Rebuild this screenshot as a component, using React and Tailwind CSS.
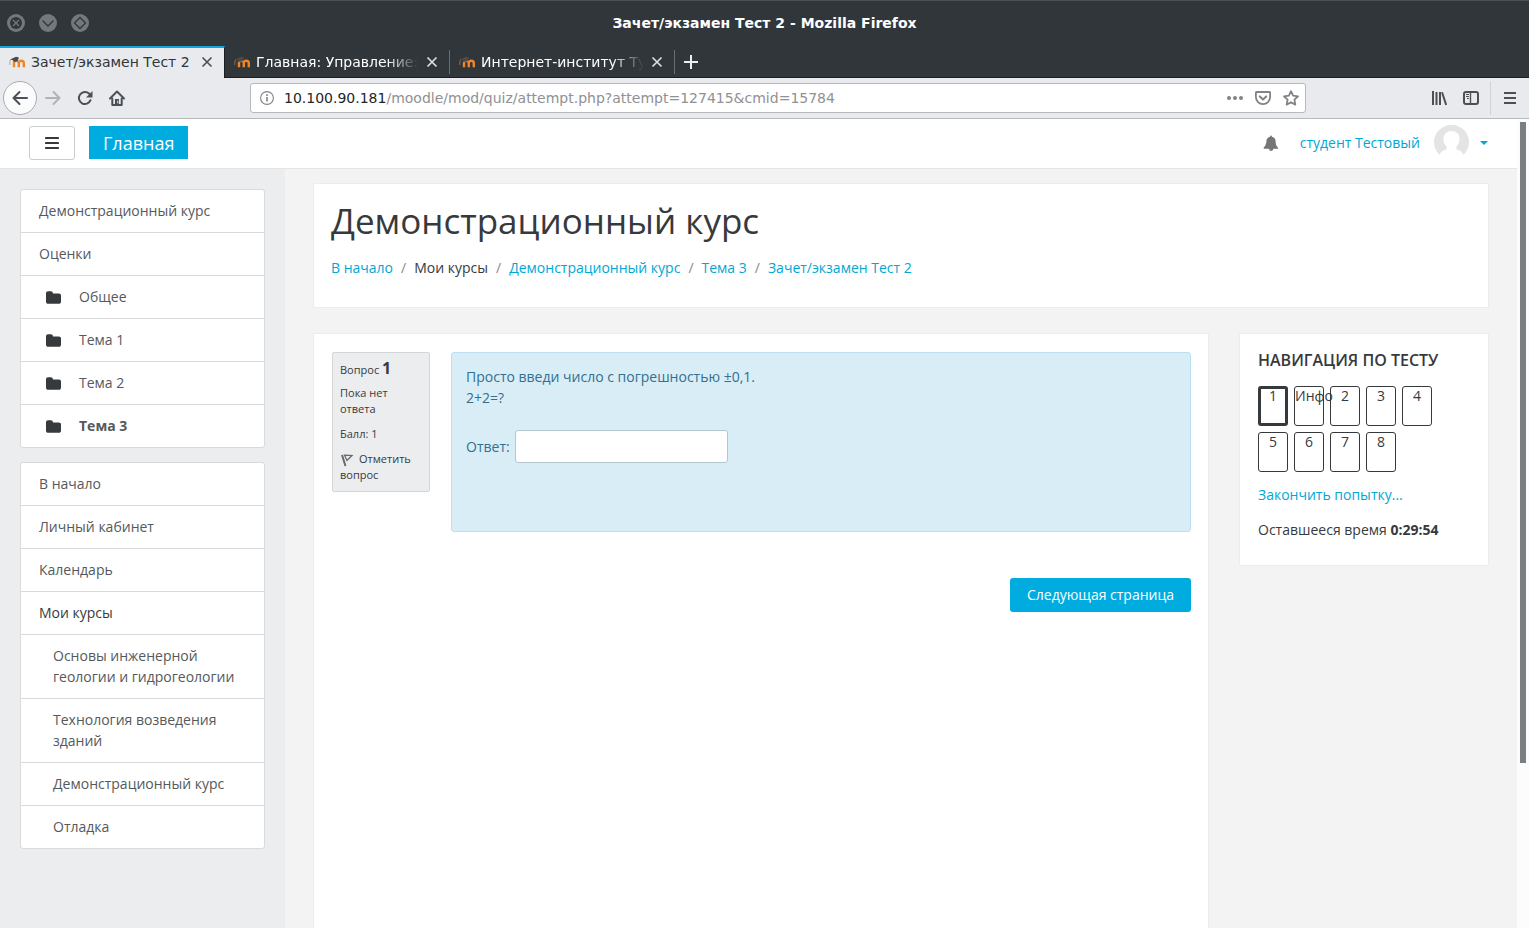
import React from "react";

const courseMenu = [
  { label: "Демонстрационный курс" },
  { label: "Оценки" },
  { label: "Общее", folder: true },
  { label: "Тема 1", folder: true },
  { label: "Тема 2", folder: true },
  { label: "Тема 3", folder: true, active: true },
];

const siteMenu = [
  { label: "В начало" },
  { label: "Личный кабинет" },
  { label: "Календарь" },
  { label: "Мои курсы", heading: true },
  { label: "Основы инженерной геологии и гидрогеологии", nested: true },
  { label: "Технология возведения зданий", nested: true },
  { label: "Демонстрационный курс", nested: true },
  { label: "Отладка", nested: true },
];

const breadcrumbs = [
  { label: "В начало", link: true },
  { label: "Мои курсы" },
  { label: "Демонстрационный курс", link: true },
  { label: "Тема 3", link: true },
  { label: "Зачет/экзамен Тест 2", link: true },
];

const tabs = ["Зачет/экзамен Тест 2", "Главная: Управление:", "Интернет-институт Ту"];

const questions = ["1", "Инфо", "2", "3", "4", "5", "6", "7", "8"];

const MoodleIcon = () => (
  <svg className="size-4 shrink-0" viewBox="0 0 16 16" fill="none" aria-hidden="true">
    <path d="M5 13.300V8.500M9.800 13.300V9c0-3 5-3 5 .2v4.100" stroke="#f08526" strokeWidth="2.400" />
    <path d="M5 9c.3-2.600 4.500-2.600 4.800 0" stroke="#f08526" strokeWidth="2" />
    <path d="M1 5.400 7 2.800l3 .7-1.500 3.800-3.800.700-.7-1.800z" fill="#4b4b4b" />
    <path d="M1.500 5.600C.8 7 .7 9 .8 11" stroke="#a98b6c" strokeWidth=".7" />
  </svg>
);

const CloseIcon = () => (
  <svg className="size-3" viewBox="0 0 12 12" fill="none" stroke="currentColor" strokeWidth="1.7" aria-hidden="true">
    <path d="m1.5 1.5 9 9m0-9-9 9" />
  </svg>
);

const FolderIcon = () => (
  <svg className="mr-[18px] ml-[7px] h-[15px] w-[15px] translate-y-px" viewBox="0 0 1664 1664" fill="#373a3c" aria-hidden="true">
    <path d="M1664 608v704q0 92-66 158t-158 66H224q-92 0-158-66T0 1312V352q0-92 66-158t158-66h320q92 0 158 66t66 158v32h672q92 0 158 66t66 158z" />
  </svg>
);

const BellIcon = () => (
  <svg className="size-4" viewBox="0 0 1792 1792" fill="currentColor" aria-hidden="true">
    <path d="M912 1696q0-16-16-16-59 0-101.5-42.5T752 1536q0-16-16-16t-16 16q0 73 51.5 124.5T896 1712q16 0 16-16zm816-288q0 52-38 90t-90 38h-448q0 106-75 181t-181 75-181-75-75-181H192q-52 0-90-38t-38-90q50-42 91-88t85-119.5 74.5-158.5 50-206T384 640q0-152 117-282.5T808 199q-8-19-8-39 0-40 28-68t68-28 68 28 28 68q0 20-8 39 190 28 307 158.5T1408 640q0 139 19.5 260t50 206 74.5 158.5 85 119.5 91 88z" />
  </svg>
);

const WindowButton = ({ label, children }) => (
  <button aria-label={label} className="size-[18px]">
    <svg viewBox="0 0 18 18" fill="none" stroke="#31363b" strokeWidth="1.3">
      <circle cx="9" cy="9" r="9" fill="#74787c" stroke="none" />
      {children}
    </svg>
  </button>
);

const TitleBar = () => (
  <div className="grid h-[46px] shrink-0 grid-cols-[1fr_auto_1fr] items-center border-t border-[#4b5157] bg-[#31363b] px-[7px] pb-[2px]">
    <div className="flex gap-[14px]">
      <WindowButton label="Закрыть">
        <circle cx="9" cy="9" r="6" fill="#31363b" stroke="none" />
        <path d="m6 6 6 6m0-6-6 6" stroke="#74787c" />
      </WindowButton>
      <WindowButton label="Свернуть">
        <path d="m3.5 6.5 5.5 5.5 5.5-5.5" />
      </WindowButton>
      <WindowButton label="Развернуть">
        <path d="m9 3.5 5.5 5.5L9 14.5 3.5 9z" />
      </WindowButton>
    </div>
    <div className="text-sm font-bold text-white">Зачет/экзамен Тест 2 - Mozilla Firefox</div>
  </div>
);

const TabBar = () => (
  <div className="flex h-8 shrink-0 bg-[#31363b] text-sm">
    {tabs.map((title, index) => (
      <div
        key={title}
        className={
          index === 0
            ? "flex w-[225px] items-center border-t-2 border-r border-t-[#12a9da] border-r-[#1b1e21] bg-[#e9eaee] pb-[2px] pl-[9px] text-[#31363b]"
            : "flex w-[225px] items-center border-b border-[#1b1e21] pl-[9px] text-white"
        }
      >
        <MoodleIcon />
        <span
          className={
            index === 0
              ? "ml-[6px] w-[168px] whitespace-nowrap"
              : "ml-[6px] w-[163px] whitespace-nowrap [mask-image:linear-gradient(to_right,black_80%,transparent)]"
          }
        >
          {title}
        </span>
        <button
          aria-label="Закрыть вкладку"
          className={index === 0 ? "ml-[2px] text-[#4c5257]" : "ml-[7px] text-[#dcdddd]"}
        >
          <CloseIcon />
        </button>
        {index > 0 && <span className="ml-auto h-6 w-px bg-[#6b6f73]" />}
      </div>
    ))}
    <div className="flex flex-1 items-center border-b border-[#1b1e21] pl-[9px]">
      <button aria-label="Новая вкладка" className="text-[#eeeeee]">
        <svg className="size-[14px]" viewBox="0 0 14 14" fill="none" stroke="currentColor" strokeWidth="2">
          <path d="M7 0v14M0 7h14" />
        </svg>
      </button>
    </div>
  </div>
);

const ToolBar = () => (
  <div className="flex h-[41px] shrink-0 items-center border-b border-[#b7b9be] bg-[#e9eaee] pr-[11px] pl-[3px] text-[#4a5055]">
    <button
      aria-label="Назад"
      className="flex size-[34px] items-center justify-center rounded-full border border-[#a9abae] bg-[#fbfbfb]"
    >
      <svg className="size-4" viewBox="0 0 16 16" fill="none" stroke="currentColor" strokeWidth="2" strokeLinecap="round" strokeLinejoin="round">
        <path d="M15 8H1.5M7.5 2l-6 6 6 6" />
      </svg>
    </button>
    <button aria-label="Вперёд" className="ml-2 text-[#b0b2b6]">
      <svg className="size-4" viewBox="0 0 16 16" fill="none" stroke="currentColor" strokeWidth="2" strokeLinecap="round" strokeLinejoin="round">
        <path d="M1 8h13.5M8.500 2l6 6-6 6" />
      </svg>
    </button>
    <button aria-label="Обновить" className="ml-4">
      <svg className="size-4" viewBox="0 0 16 16" fill="none">
        <path d="M13.500 10.200A6 6 0 1 1 12 3.600L13.500 5" stroke="currentColor" strokeWidth="2" strokeLinecap="round" />
        <path d="M15.500 1v6.500H9z" fill="currentColor" />
      </svg>
    </button>
    <button aria-label="Домой" className="ml-4">
      <svg className="size-4" viewBox="0 0 16 16" fill="none" stroke="currentColor" strokeWidth="2" strokeLinecap="round" strokeLinejoin="round">
        <path d="M1 8.500 8 1.500l7 7M3.300 8.500V15h9.400V8.500" />
        <path d="M6 15V9h4v6z" fill="currentColor" stroke="none" />
        <path d="M8.800 11v2" stroke="#e9eaee" strokeWidth="1" />
      </svg>
    </button>

    <div className="ml-[125px] flex h-[30px] flex-1 items-center rounded-[3px] border border-[#b7b9be] bg-white text-[#808386]">
      <svg className="ml-[9px] size-[14px]" viewBox="0 0 14 14" fill="none" stroke="currentColor" aria-hidden="true">
        <circle cx="7" cy="7" r="6.4" strokeWidth="1.1" />
        <path d="M7 6v4.500M7 3.300V5" strokeWidth="1.6" />
      </svg>
      <div className="ml-[10px] flex-1 text-sm text-[#8f9193]">
        <span className="text-[#232629]">10.100.90.181</span>
        /moodle/mod/quiz/attempt.php?attempt=127415&amp;cmid=15784
      </div>
      <div className="mr-[6px] flex items-center gap-3">
        <button aria-label="Действия на странице">
          <svg className="size-4" viewBox="0 0 16 16" fill="currentColor">
            <circle cx="2" cy="8" r="2" />
            <circle cx="8" cy="8" r="2" />
            <circle cx="14" cy="8" r="2" />
          </svg>
        </button>
        <button aria-label="Сохранить в Pocket">
          <svg className="size-4" viewBox="0 0 16 16" fill="none" stroke="currentColor" strokeWidth="1.8" strokeLinecap="round" strokeLinejoin="round">
            <path d="M1.500 2h13c.4 0 .6.200.6.600V7a7.100 7.100 0 0 1-14.200 0V2.600c0-.4.200-.6.600-.6z" />
            <path d="m4.800 6.400 3.200 3 3.200-3" strokeWidth="2" />
          </svg>
        </button>
        <button aria-label="Добавить в закладки">
          <svg className="size-4" viewBox="0 0 16 16" fill="none" stroke="currentColor" strokeWidth="1.800" strokeLinejoin="round">
            <path d="m8 1.200 2.100 4.500 4.900.6-3.600 3.400.9 4.900L8 12.200l-4.300 2.400.9-4.900L1 6.300l4.900-.6z" />
          </svg>
        </button>
      </div>
    </div>

    <div className="ml-[125px] flex items-center">
      <button aria-label="Библиотека">
        <svg className="size-4" viewBox="0 0 16 16" fill="none" stroke="currentColor" strokeWidth="2">
          <path d="M2 1v14M5.500 2v13M9 2v13M11 2.200 15.200 15" />
        </svg>
      </button>
      <button aria-label="Боковая панель" className="ml-4">
        <svg className="size-4" viewBox="0 0 16 16" fill="none" stroke="currentColor">
          <rect x="1" y="2" width="14" height="12" rx="2" strokeWidth="2" />
          <path d="M7.500 2v12" strokeWidth="1.400" />
          <path d="M3 4.500h3M3 6.500h3M4 8.500h2" />
        </svg>
      </button>
      <span className="ml-[11px] h-[34px] w-px bg-[#d0d1d5]" />
      <button aria-label="Меню" className="ml-[11px]">
        <svg className="size-4" viewBox="0 0 16 16" fill="none" stroke="currentColor" strokeWidth="2">
          <path d="M2 3h12M2 8h12M2 13h12" />
        </svg>
      </button>
    </div>
  </div>
);

const Header = () => (
  <header className="flex h-[50px] shrink-0 items-center border-b border-[#e3e4e5] bg-white pr-[29px] pb-[2px] pl-[29px]">
    <button
      aria-label="Боковая панель навигации"
      className="flex h-[34px] w-[46px] items-center justify-center rounded-[3px] border border-[#cccccc]"
    >
      <svg className="h-3 w-[14px]" viewBox="0 0 14 12" fill="#373a3c" aria-hidden="true">
        <rect width="14" height="2" rx=".4" />
        <rect y="5" width="14" height="2" rx=".4" />
        <rect y="10" width="14" height="2" rx=".4" />
      </svg>
    </button>
    <a href="#" className="ml-[14px] flex h-[33px] items-center bg-[#00acdf] px-[14px] text-lg text-white">
      Главная
    </a>
    <button aria-label="Уведомления" className="ml-auto text-[#757575]">
      <BellIcon />
    </button>
    <button className="ml-[21px] flex items-center text-sm text-[#00a8d5]">
      студент Тестовый
      <svg className="ml-[14px] size-[35px]" viewBox="0 0 35 35" aria-hidden="true">
        <path
          d="M5.500 30A17.500 17.500 0 1 1 29.500 30C28.500 27 26.500 25.500 22.500 24.500V21.500C24.500 19.500 25.500 17 25.500 14C25.500 9 22.500 6 17.500 6S9.500 9 9.500 14C9.500 17 10.500 19.500 12.500 21.500V24.500C8.500 25.500 6.500 27 5.500 30Z"
          fill="#e4e4e4"
        />
      </svg>
      <svg className="ml-[11px] h-1 w-2" viewBox="0 0 8 4" fill="currentColor" aria-hidden="true">
        <path d="M0 0h8L4 4z" />
      </svg>
    </button>
  </header>
);

const MenuItem = ({ item }) => {
  if (item.heading) {
    return (
      <li className="border-b border-[#d8dadc] px-[18px] pt-[10px] pb-[11px] text-[#373a3c] last:border-b-0">
        {item.label}
      </li>
    );
  }

  return (
    <li className="border-b border-[#d8dadc] last:border-b-0">
      <a
        href="#"
        className={
          item.nested
            ? "flex pt-[10px] pr-[18px] pb-[11px] pl-[32px]"
            : "flex items-center px-[18px] pt-[10px] pb-[11px]"
        }
      >
        {item.folder && <FolderIcon />}
        <span className={item.active ? "font-bold" : ""}>{item.label}</span>
      </a>
    </li>
  );
};

const Sidebar = () => (
  <nav className="flex w-[285px] shrink-0 flex-col gap-[14px] bg-[#ebedef] p-5 text-sm/[21px] text-[#55595c]">
    {[courseMenu, siteMenu].map((menu, index) => (
      <ul key={index} className="rounded-[3px] border border-[#d8dadc] bg-white">
        {menu.map((item) => (
          <MenuItem key={item.label} item={item} />
        ))}
      </ul>
    ))}
  </nav>
);

const PageHeader = () => (
  <div className="h-[125px] shrink-0 border border-[#ececec] bg-white px-[17px] pt-[17px]">
    <h1 className="text-[35px] leading-[40px]">Демонстрационный курс</h1>
    <ol className="mt-[16px] flex text-sm/[21px]">
      {breadcrumbs.map((crumb, index) => (
        <li key={crumb.label}>
          {index > 0 && <span className="px-2 text-[#818a91]">/</span>}
          {crumb.link ? (
            <a href="#" className="text-[#00a8d5]">{crumb.label}</a>
          ) : (
            crumb.label
          )}
        </li>
      ))}
    </ol>
  </div>
);

const Question = () => (
  <div className="flex items-start gap-[21px]">
    <div className="w-[98px] shrink-0 rounded-[2px] border border-[#d3d6d9] bg-[#ebedef] px-[7px] pt-1 pb-2 text-[11px] leading-4">
      <h3 className="leading-[22px]">
        Вопрос <span className="text-base/[22px] font-bold">1</span>
      </h3>
      <div className="mt-1">Пока нет ответа</div>
      <div className="mt-[9px]">Балл: 1</div>
      <button className="mt-[9px] text-left">
        <svg className="mr-[5px] inline size-[14px]" viewBox="0 0 14 14" fill="none" stroke="#6a6a6a" aria-hidden="true">
          <path d="M2 2 5.500 13" strokeWidth="2" />
          <path d="M4.500 2.200 12 2.500 7 7.500z" strokeWidth="1.300" />
        </svg>
        Отметить вопрос
      </button>
    </div>
    <div className="h-[180px] flex-1 rounded-[3px] border border-[#bcdff1] bg-[#d9edf7] px-[14px] pt-[13px] text-sm/[21px] text-[#31708f]">
      <p>Просто введи число с погрешностью ±0,1.</p>
      <p>2+2=?</p>
      <div className="mt-[22px] flex items-center gap-[5px]">
        <label htmlFor="answer">Ответ:</label>
        <input
          id="answer"
          name="answer"
          type="text"
          autoComplete="off"
          className="h-[33px] w-[213px] rounded-[3px] border border-[#b4c6cf] bg-white px-2 focus:outline-none"
        />
      </div>
    </div>
  </div>
);

const QuizNavigation = () => (
  <aside className="w-[250px] shrink-0 self-start border border-[#ececec] bg-white px-[18px] pt-4 pb-[25px]">
    <h2 className="text-base/[20px] font-semibold">НАВИГАЦИЯ ПО ТЕСТУ</h2>
    <div className="mt-4 grid grid-cols-[repeat(5,30px)] gap-[6px]">
      {questions.map((question, index) => (
        <a
          key={question}
          href="#"
          className={
            index === 0
              ? "flex h-10 justify-center rounded-[3px] border-3 border-[#373a3c] leading-[14px]"
              : question === "Инфо"
                ? "h-10 rounded-[3px] border border-[#373a3c] leading-[18px] whitespace-nowrap"
                : "flex h-10 justify-center rounded-[3px] border border-[#373a3c] leading-[18px]"
          }
        >
          {question}
        </a>
      ))}
    </div>
    <a href="#" className="mt-[12px] block text-[#00a8d5]">Закончить попытку...</a>
    <div className="mt-[14px]">
      Оставшееся время <span className="font-bold">0:29:54</span>
    </div>
  </aside>
);

const App = () => {
  return (
    <div className="flex h-screen flex-col overflow-hidden font-['DejaVu_Sans',sans-serif]">
      {/* Browser chrome */}
      <TitleBar />
      <TabBar />
      <ToolBar />

      <div className="flex min-h-0 flex-1 bg-white font-['Open_Sans',sans-serif] text-sm/[21px] text-[#373a3c]">
        <div className="flex min-w-0 flex-1 flex-col">
          <Header />
          <div className="flex min-h-0 flex-1">
            <Sidebar />
            <main className="flex min-w-0 flex-1 flex-col gap-[25px] bg-[#f3f3f3] px-[28px] pt-[14px]">
              <PageHeader />
              <div className="flex min-h-0 flex-1 gap-[30px]">
                <section className="flex-1 border border-b-0 border-[#ececec] bg-white pt-[18px] pr-[17px] pl-[18px]">
                  <Question />
                  <div className="mt-[46px] flex justify-end">
                    <button className="h-[34px] rounded-[3px] bg-[#00acdf] px-[17px] pb-px text-white">
                      Следующая страница
                    </button>
                  </div>
                </section>
                <QuizNavigation />
              </div>
            </main>
          </div>
        </div>

        {/* Scrollbar */}
        <div className="w-3 shrink-0 bg-[#fcfcfc] px-[3px] pt-[3px]">
          <div className="h-[641px] max-h-full bg-[#7a7e81]" />
        </div>
      </div>
    </div>
  );
};

export default App;
